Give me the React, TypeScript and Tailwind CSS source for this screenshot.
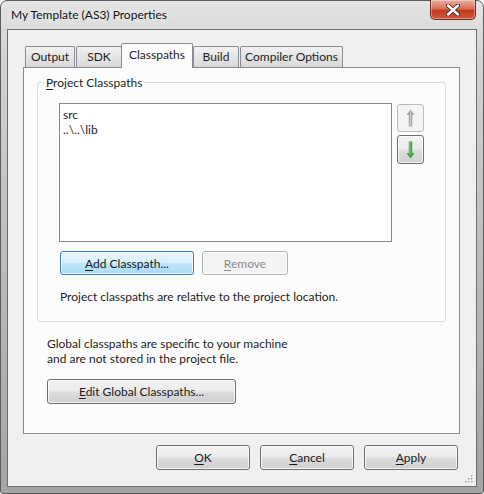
import React from "react";

const font = "font-['Lato','Noto_Sans',sans-serif]";

function Key({ c }: { c: string }) {
  return <span className="underline underline-offset-[2px] decoration-[1px]">{c}</span>;
}

function WinButton({
  children,
  w,
  h = 25,
  focused = false,
  disabled = false,
}: {
  children: React.ReactNode;
  w: string;
  h?: number;
  focused?: boolean;
  disabled?: boolean;
}) {
  let cls =
    "border-[#707070] bg-[linear-gradient(#f2f2f2_0%,#ebebeb_48%,#dddddd_52%,#cfcfcf_100%)] text-[#1a1a1a]";
  if (focused)
    cls =
      "border-[#3c7fb1] bg-[linear-gradient(#eaf6fd_0%,#d9f0fc_48%,#bee6fd_52%,#a7d9f5_100%)] text-[#1a1a1a]";
  if (disabled) cls = "border-[#adb2b5] bg-[#f4f4f4] text-[#8a8a8a]";
  return (
    <div
      className={`${w} ${cls} flex items-center justify-center rounded-[3px] border shadow-[inset_0_0_0_1px_rgba(255,255,255,0.75)]`}
      style={{ height: h }}
    >
      {children}
    </div>
  );
}

function Tab({ label, cls, selected = false }: { label: string; cls: string; selected?: boolean }) {
  if (selected)
    return (
      <div
        className={`${cls} relative z-10 h-[25px] -mb-px flex items-start justify-center pt-[3px] rounded-t-[2px] border border-b-0 border-[#898c95] bg-[#fcfcfc]`}
      >
        {label}
      </div>
    );
  return (
    <div
      className={`${cls} h-[21px] flex items-center justify-center rounded-t-[2px] border border-b-0 border-[#898c95] bg-[linear-gradient(#f2f2f2,#e4e4e4_50%,#d9d9d9)] pb-[1px]`}
    >
      {label}
    </div>
  );
}

export default function App() {
  return (
    <div
      className={`${font} text-[12px] leading-[15px] text-[#1e1e1e] w-[484px] h-[494px] flex flex-col rounded-t-[7px] rounded-b-[3px] border border-[#5b5b5b] bg-[linear-gradient(#e4e4e4_0%,#d2d2d2_12%,#b8b8b8_60%,#a4a4a4_100%)]`}
    >
      {/* title bar */}
      <div className="h-[28px] flex items-start justify-between">
        <div className="pl-[10px] pt-[6px] text-[#111] [text-shadow:0_0_6px_rgba(255,255,255,0.9)]">
          My Template (AS3) Properties
        </div>
        <div className="mr-[7px] -mt-px w-[46px] h-[20px] flex items-center justify-center rounded-b-[5px] border border-t-0 border-[#6b2c22] bg-[linear-gradient(#eab0a0_0%,#d9715a_45%,#c2391d_55%,#d45a3c_100%)] shadow-[inset_0_0_0_1px_rgba(255,255,255,0.35)]">
          <svg width="14" height="12" viewBox="0 0 14 12">
            <path d="M2 1.5 L12 10.5 M12 1.5 L2 10.5" stroke="#3a2a2a" strokeWidth="4.2" strokeLinecap="round" />
            <path d="M2 1.5 L12 10.5 M12 1.5 L2 10.5" stroke="#ffffff" strokeWidth="2.4" strokeLinecap="round" />
          </svg>
        </div>
      </div>

      {/* client area */}
      <div className="relative mx-[6px] h-[458px] border border-[#6e6e6e] bg-[#f0f0f0] flex flex-col">
        {/* tab control */}
        <div className="ml-[15px] mt-[13px] w-[437px] flex flex-col">
          <div className="h-[24px] flex items-end pl-[2px]">
            <Tab label="Output" cls="w-[50px]" />
            <Tab label="SDK" cls="ml-[1px] w-[46px]" />
            <Tab label="Classpaths" cls="-ml-[1px] w-[72px]" selected />
            <Tab label="Build" cls="w-[46px]" />
            <Tab label="Compiler Options" cls="ml-[1px] w-[103px]" />
          </div>
          <div className="h-[367px] border border-[#898c95] bg-[#fcfcfc] flex flex-col">
            {/* group box */}
            <div className="relative ml-[13px] mt-[14px] w-[409px] h-[240px] rounded-[3px] border border-[#d5dfe5] flex flex-col pl-[21px] pt-[20px]">
              <div className="absolute -top-[8px] left-[6px] px-[2px] bg-[#fcfcfc]">
                <Key c="P" />roject Classpaths
              </div>
              <div className="flex items-start">
                <div className="w-[333px] h-[139px] border border-[#828790] bg-white pl-[3px] pt-[3px]">
                  <div>src</div>
                  <div>..\..\lib</div>
                </div>
                <div className="ml-[5px] mt-px flex flex-col gap-[3px]">
                  <div className="w-[27px] h-[28px] rounded-[3px] border border-[#b8bcbf] bg-[#f4f4f4] flex items-center justify-center">
                    <svg width="9" height="18" viewBox="0 0 9 18">
                      <path d="M4.5 0.5 L8.5 6 L6.2 6 L6.2 17.5 L2.8 17.5 L2.8 6 L0.5 6 Z" fill="#a6a6a6" />
                      <path d="M4.5 2 L4.5 17" stroke="#cfcfcf" strokeWidth="1" />
                    </svg>
                  </div>
                  <div className="w-[27px] h-[29px] rounded-[3px] border border-[#707070] bg-[linear-gradient(#f2f2f2_0%,#ebebeb_48%,#dddddd_52%,#cfcfcf_100%)] shadow-[inset_0_0_0_1px_rgba(255,255,255,0.75)] flex items-center justify-center">
                    <svg width="9" height="18" viewBox="0 0 9 18">
                      <path d="M4.5 17.5 L8.5 12 L6.2 12 L6.2 0.5 L2.8 0.5 L2.8 12 L0.5 12 Z" fill="#3f9f3f" />
                      <path d="M4 1 L4 14" stroke="#8fd88f" strokeWidth="1" />
                    </svg>
                  </div>
                </div>
              </div>
              <div className="ml-px mt-[9px] flex gap-[8px]">
                <WinButton w="w-[134px]" h={24} focused>
                  <span>
                    <Key c="A" />dd Classpath...
                  </span>
                </WinButton>
                <WinButton w="w-[86px]" h={24} disabled>
                  <span>
                    <Key c="R" />emove
                  </span>
                </WinButton>
              </div>
              <div className="ml-px mt-[14px] leading-[16px]">
                Project classpaths are relative to the project location.
              </div>
            </div>

            <div className="pl-[23px] mt-[14px]">
              <div>Global classpaths are specific to your machine</div>
              <div>and are not stored in the project file.</div>
            </div>
            <div className="pl-[23px] mt-[13px]">
              <WinButton w="w-[189px]">
                <span>
                  <Key c="E" />dit Global Classpaths...
                </span>
              </WinButton>
            </div>
          </div>
        </div>

        {/* dialog buttons */}
        <div className="mt-[11px] flex justify-end gap-[10px] pr-[18px]">
          <WinButton w="w-[94px]">
            <span>
              <Key c="O" />K
            </span>
          </WinButton>
          <WinButton w="w-[94px]">
            <span>
              <Key c="C" />ancel
            </span>
          </WinButton>
          <WinButton w="w-[94px]">
            <span>
              <Key c="A" />pply
            </span>
          </WinButton>
        </div>

        {/* size grip */}
        <svg className="absolute right-[2px] bottom-[2px]" width="10" height="10" viewBox="0 0 10 10">
          {[
            [8, 2],
            [5, 5],
            [8, 5],
            [2, 8],
            [5, 8],
            [8, 8],
          ].map(([x, y], i) => (
            <g key={i}>
              <rect x={x} y={y} width="1.5" height="1.5" fill="#ffffff" />
              <rect x={x - 1} y={y - 1} width="1.5" height="1.5" fill="#a0a0a0" />
            </g>
          ))}
        </svg>
      </div>
    </div>
  );
}
